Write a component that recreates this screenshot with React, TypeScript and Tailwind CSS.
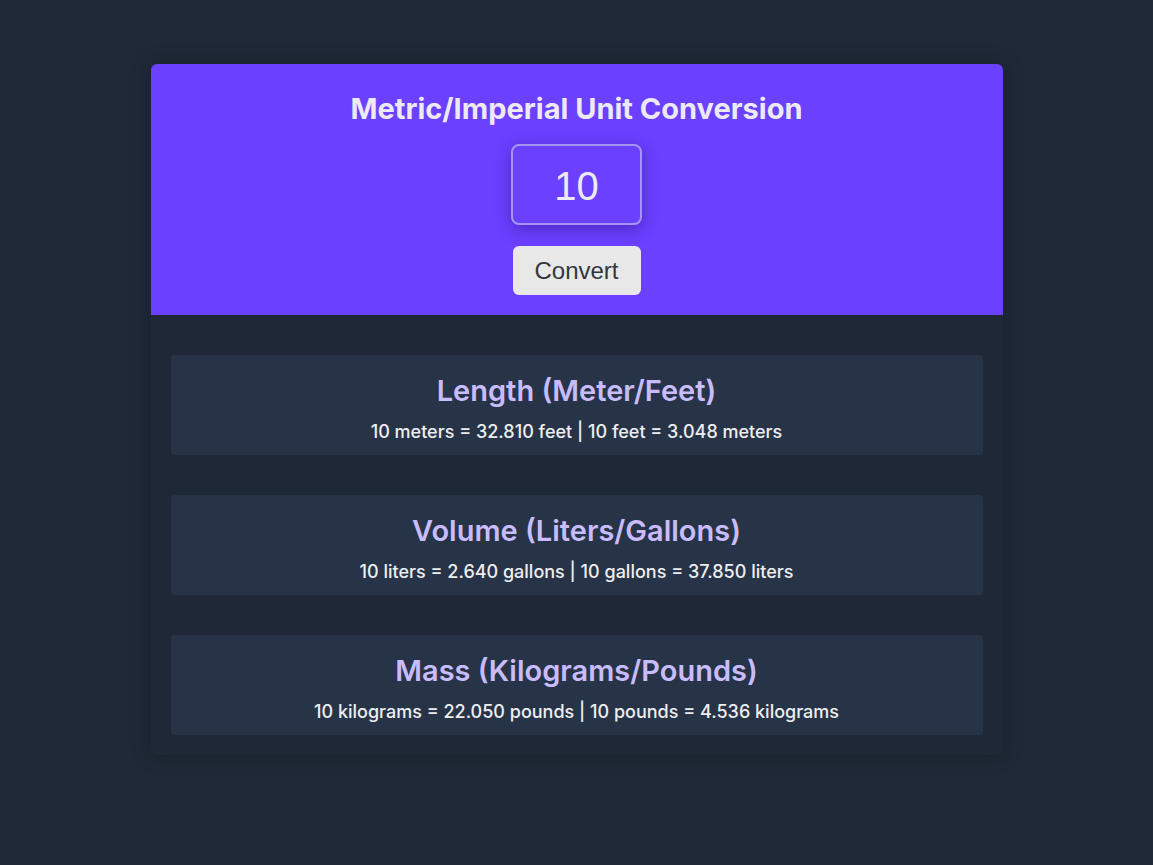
import React, { useState } from "react";

const round3 = (n: number) => n.toFixed(3);

const App: React.FC = () => {
  const [value, setValue] = useState("10");
  const [num, setNum] = useState(10);

  const rows = [
    {
      title: "Length (Meter/Feet)",
      text: `${num} meters = ${round3(num * 3.281)} feet | ${num} feet = ${round3(num / 3.281)} meters`,
    },
    {
      title: "Volume (Liters/Gallons)",
      text: `${num} liters = ${round3(num * 0.264)} gallons | ${num} gallons = ${round3(num * 3.785)} liters`,
    },
    {
      title: "Mass (Kilograms/Pounds)",
      text: `${num} kilograms = ${round3(num * 2.205)} pounds | ${num} pounds = ${round3(num * 0.4536)} kilograms`,
    },
  ];

  return (
    <div className="min-h-screen bg-[#1f2937] pt-16 font-['Inter',sans-serif]">
      <div className="mx-auto w-[852px] overflow-hidden rounded-md bg-[#1f2836] shadow-[0_0_20px_rgba(0,0,0,0.25)]">
        {/* header */}
        <div className="flex flex-col items-center bg-[#6b40ff] pt-[27px] pb-5">
          <h1 className="text-[29px] font-bold leading-9 text-[#eceaf5]">
            Metric/Imperial Unit Conversion
          </h1>
          <input
            value={value}
            onChange={(e) => setValue(e.target.value)}
            className="mt-[17px] h-[81px] w-[131px] rounded-lg border-2 border-[#a894f5] bg-transparent pt-[3px] text-center font-['Liberation_Sans',Arial,sans-serif] text-[40px] text-[#eceaf5] shadow-[0_4px_16px_rgba(40,10,120,0.45)] outline-none"
          />
          <button
            onClick={() => setNum(Number(value) || 0)}
            className="mt-[21px] h-[49px] w-[128px] rounded-md bg-[#e8e8e8] font-['Liberation_Sans',Arial,sans-serif] text-[24px] text-[#33363d]"
          >
            Convert
          </button>
        </div>

        {/* results */}
        <div className="flex flex-col gap-10 px-5 pt-10 pb-5">
          {rows.map((r, i) => (
            <div
              key={i}
              className="flex h-[100px] flex-col items-center rounded bg-[#273447] pt-[18px]"
            >
              <h2 className="text-[29px] font-semibold leading-9 text-[#c9bcfd]">
                {r.title}
              </h2>
              <p className="mt-[11px] text-[18px] font-medium leading-6 text-[#eeeef0]">
                {r.text}
              </p>
            </div>
          ))}
        </div>
      </div>
    </div>
  );
};

export default App;
